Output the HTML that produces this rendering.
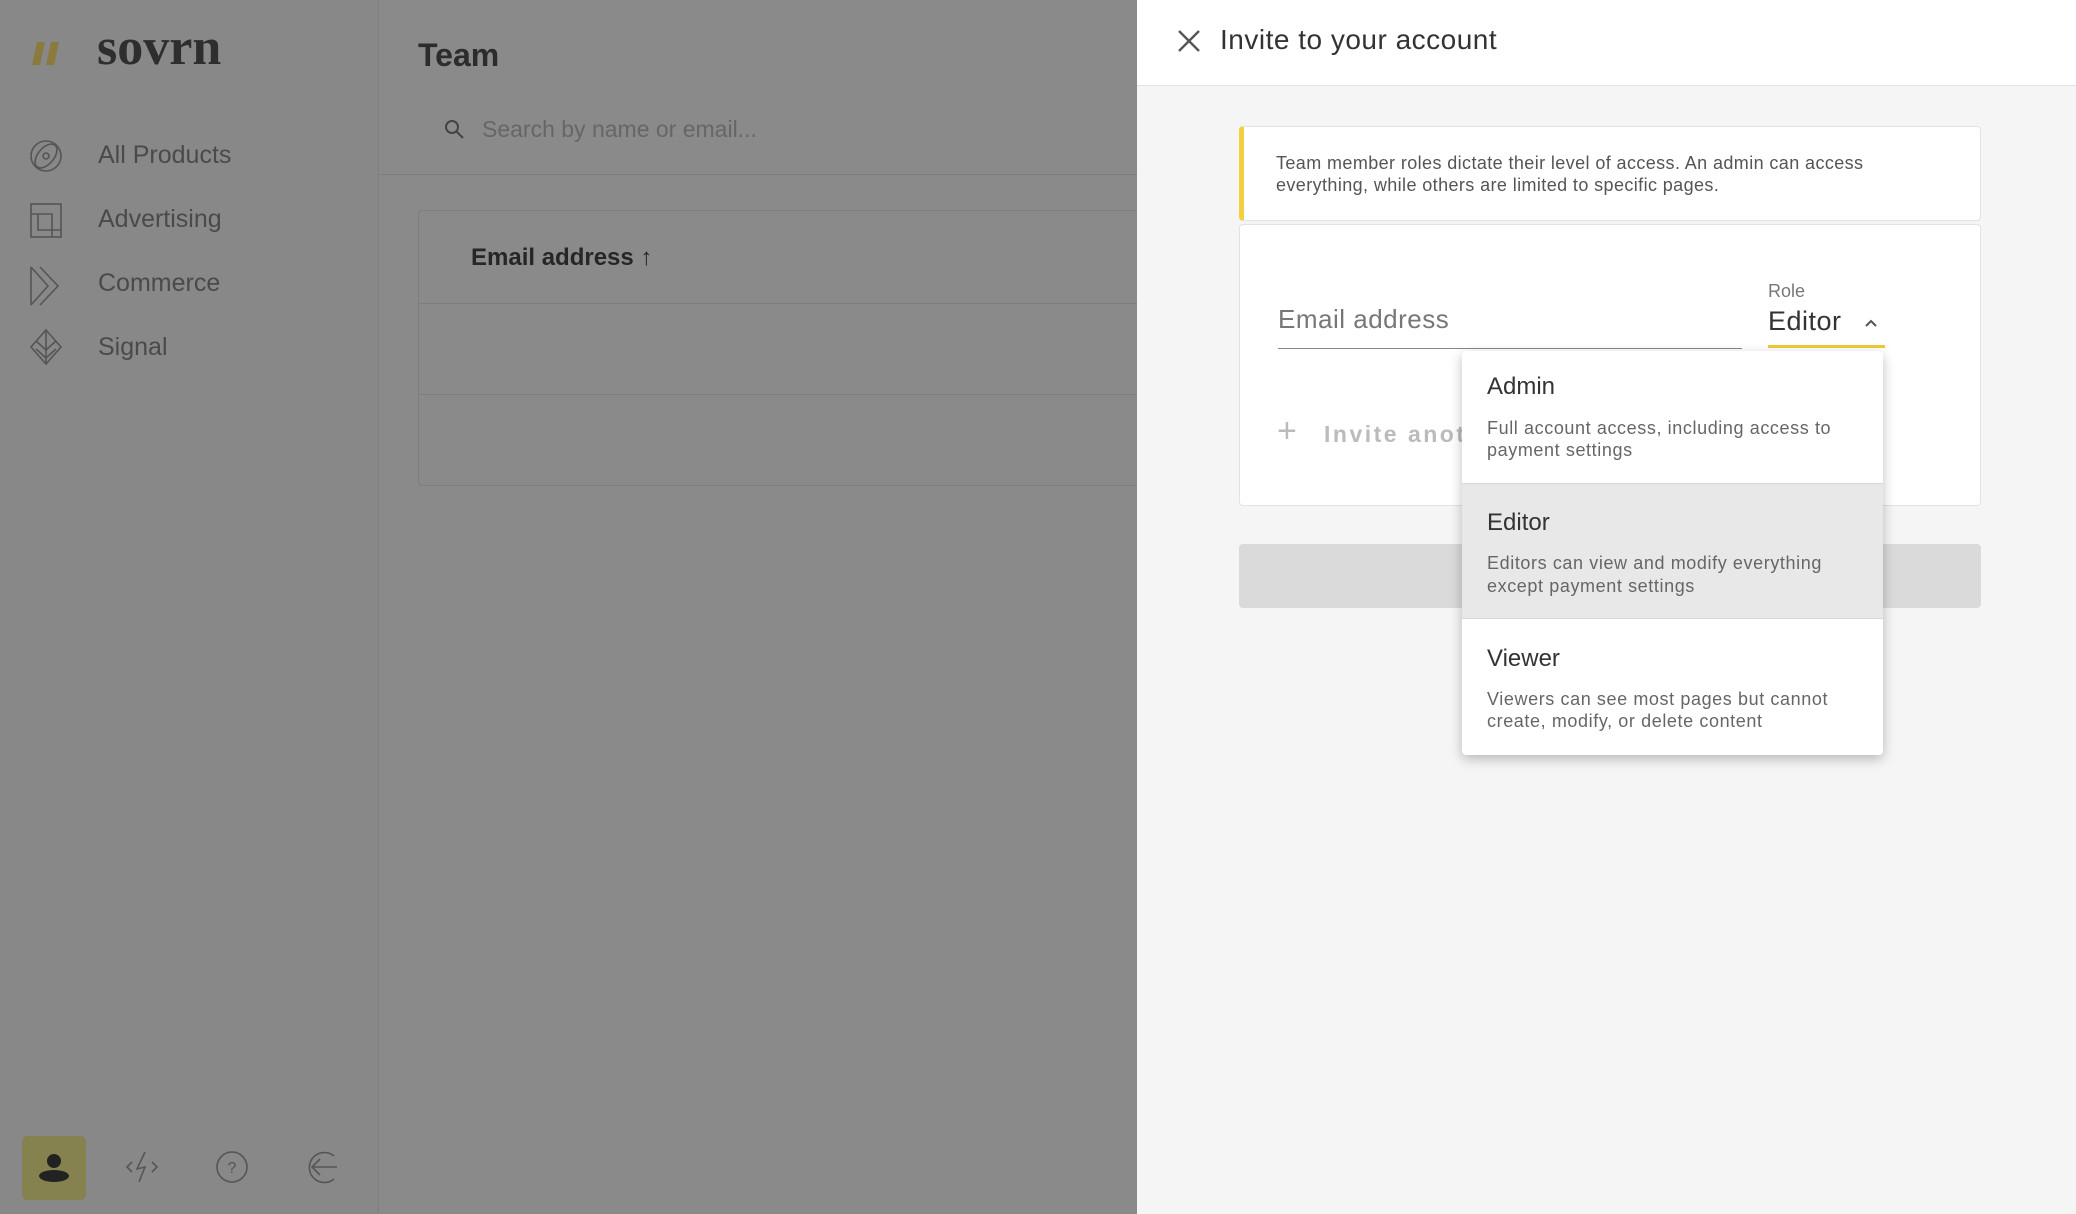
<!DOCTYPE html>
<html><head><meta charset="utf-8"><style>
*{margin:0;padding:0;box-sizing:border-box}
body{width:2076px;height:1214px;overflow:hidden;position:relative;font-family:"Liberation Sans",sans-serif;background:#8a8a8a}
.a{position:absolute;white-space:nowrap}
</style></head><body>
<!-- sidebar -->
<div class="a" style="left:0;top:0;width:379px;height:1214px;background:#888;border-right:1px solid #7e7e7e"></div>
<svg class="a" style="left:32px;top:42px" width="32" height="24"><polygon points="5,0 13,0 8,23 0,23" fill="#8a7a3e"/><polygon points="19,0 27,0 22,23 14,23" fill="#8a7a3e"/></svg>
<div class="a" style="left:97px;top:22px;font-family:'Liberation Serif',serif;font-weight:bold;font-size:52px;line-height:52px;color:#2e2e2e">sovrn</div>
<svg class="a" style="left:28px;top:136px" width="40" height="300" fill="none" stroke="#555" stroke-width="1.6">
<circle cx="18" cy="20" r="15"/><ellipse cx="18" cy="20" rx="8" ry="14" transform="rotate(40 18 20)"/><circle cx="18" cy="20" r="3"/>
<rect x="3" y="68" width="30" height="33"/><polyline points="3,78 24,78 24,101"/><polyline points="10,78 10,94 33,94"/>
<polyline points="3,131 20,150 3,169"/><polyline points="12,131 30,150 12,169"/><line x1="3" y1="131" x2="3" y2="169"/>
<polygon points="18,194 33,211 18,228 3,211"/><line x1="18" y1="194" x2="18" y2="228"/><polyline points="8,205 18,214 28,205"/><polyline points="8,213 18,222 28,213"/>
</svg>
<div class="a" style="left:98px;top:141px;font-size:25px;color:#4a4a4a">All Products</div>
<div class="a" style="left:98px;top:205px;font-size:25px;color:#4a4a4a">Advertising</div>
<div class="a" style="left:98px;top:269px;font-size:25px;color:#4a4a4a">Commerce</div>
<div class="a" style="left:98px;top:333px;font-size:25px;color:#4a4a4a">Signal</div>
<div class="a" style="left:22px;top:1136px;width:64px;height:64px;background:#86824f;border-radius:5px"></div>
<svg class="a" style="left:36px;top:1150px" width="36" height="36"><circle cx="18" cy="11" r="7" fill="#222"/><ellipse cx="18" cy="26" rx="15" ry="6" fill="#222"/></svg>
<svg class="a" style="left:124px;top:1148px" width="240" height="40" fill="none" stroke="#555" stroke-width="1.6">
<polyline points="8,14 3,19 8,24"/><polyline points="28,14 33,19 28,24"/><polyline points="21,4 13,21 21,19 15,34"/>
<circle cx="108" cy="19" r="15"/><text x="108" y="25" font-size="16" fill="#555" stroke="none" text-anchor="middle" font-family="Liberation Sans">?</text>
<path d="M210 8 A15 15 0 1 0 210 31"/><line x1="188" y1="19" x2="213" y2="19"/><polyline points="196,11 188,19 196,27"/>
</svg>
<!-- main -->
<div class="a" style="left:418px;top:37px;font-size:32px;font-weight:bold;color:#2c2c2c">Team</div>
<svg class="a" style="left:444px;top:119px" width="22" height="22" fill="none" stroke="#444" stroke-width="2"><circle cx="8" cy="8" r="6"/><line x1="12.5" y1="12.5" x2="19" y2="19"/></svg>
<div class="a" style="left:482px;top:116px;font-size:23px;color:#666">Search by name or email...</div>
<div class="a" style="left:380px;top:174px;width:760px;height:1px;background:#7d7d7d"></div>
<div class="a" style="left:418px;top:210px;width:740px;height:276px;border:1px solid #7d7d7d;border-radius:4px"></div>
<div class="a" style="left:419px;top:303px;width:720px;height:1px;background:#7d7d7d"></div>
<div class="a" style="left:419px;top:394px;width:720px;height:1px;background:#7d7d7d"></div>
<div class="a" style="left:471px;top:244px;font-size:24px;font-weight:bold;color:#262626">Email address ↑</div>
<!-- drawer -->
<div class="a" style="left:1137px;top:0;width:939px;height:1214px;background:#f5f5f5"></div>
<div class="a" style="left:1137px;top:0;width:939px;height:86px;background:#fff;border-bottom:1px solid #e3e3e3"></div>
<svg class="a" style="left:1177px;top:29px" width="24" height="24" stroke="#555" stroke-width="2.4"><line x1="2" y1="2" x2="22" y2="22"/><line x1="22" y1="2" x2="2" y2="22"/></svg>
<div class="a" style="left:1220px;top:24px;font-size:28px;color:#333;letter-spacing:.5px">Invite to your account</div>
<div class="a" style="left:1239px;top:126px;width:742px;height:95px;background:#fff;border:1px solid #e3e3e3;border-left:5px solid #f4d03f;border-radius:4px"></div>
<div class="a" style="left:1276px;top:152px;font-size:18px;line-height:22px;color:#555;letter-spacing:.4px">Team member roles dictate their level of access. An admin can access<br>everything, while others are limited to specific pages.</div>
<div class="a" style="left:1239px;top:224px;width:742px;height:282px;background:#fff;border:1px solid #e3e3e3;border-radius:4px"></div>
<div class="a" style="left:1278px;top:304px;font-size:26px;color:#777;letter-spacing:.5px">Email address</div>
<div class="a" style="left:1278px;top:348px;width:464px;height:1px;background:#888"></div>
<div class="a" style="left:1768px;top:281px;font-size:18px;color:#777">Role</div>
<div class="a" style="left:1768px;top:306px;font-size:27px;color:#333;letter-spacing:.5px">Editor</div>
<svg class="a" style="left:1864px;top:318px" width="14" height="10" fill="none" stroke="#555" stroke-width="2"><polyline points="2,8 7,3 12,8"/></svg>
<div class="a" style="left:1768px;top:345px;width:117px;height:3px;background:#f0c93a"></div>
<div class="a" style="left:1277px;top:414px;font-size:34px;color:#bbb;line-height:1">+</div>
<div class="a" style="left:1324px;top:421px;font-size:23px;font-weight:bold;color:#bbb;letter-spacing:2.5px">Invite anot</div>
<div class="a" style="left:1239px;top:544px;width:742px;height:64px;background:#dadada;border-radius:4px"></div>
<div class="a" style="left:1462px;top:351px;width:421px;height:404px;background:#fff;border-radius:4px;box-shadow:0 4px 12px rgba(0,0,0,.25);overflow:hidden">
<div style="position:absolute;left:0;top:132px;width:421px;height:136px;background:#e8e8e8;border-top:1px solid #d6d6d6;border-bottom:1px solid #d6d6d6"></div>
<div class="a" style="left:25px;top:22px;font-size:24px;color:#333">Admin</div>
<div class="a" style="left:25px;top:66px;font-size:18px;line-height:22px;color:#666;letter-spacing:.6px">Full account access, including access to<br>payment settings</div>
<div class="a" style="left:25px;top:158px;font-size:24px;color:#333">Editor</div>
<div class="a" style="left:25px;top:201px;font-size:18px;line-height:23px;color:#666;letter-spacing:.6px">Editors can view and modify everything<br>except payment settings</div>
<div class="a" style="left:25px;top:294px;font-size:24px;color:#333">Viewer</div>
<div class="a" style="left:25px;top:337px;font-size:18px;line-height:22px;color:#666;letter-spacing:.6px">Viewers can see most pages but cannot<br>create, modify, or delete content</div>
</div>
</body></html>
